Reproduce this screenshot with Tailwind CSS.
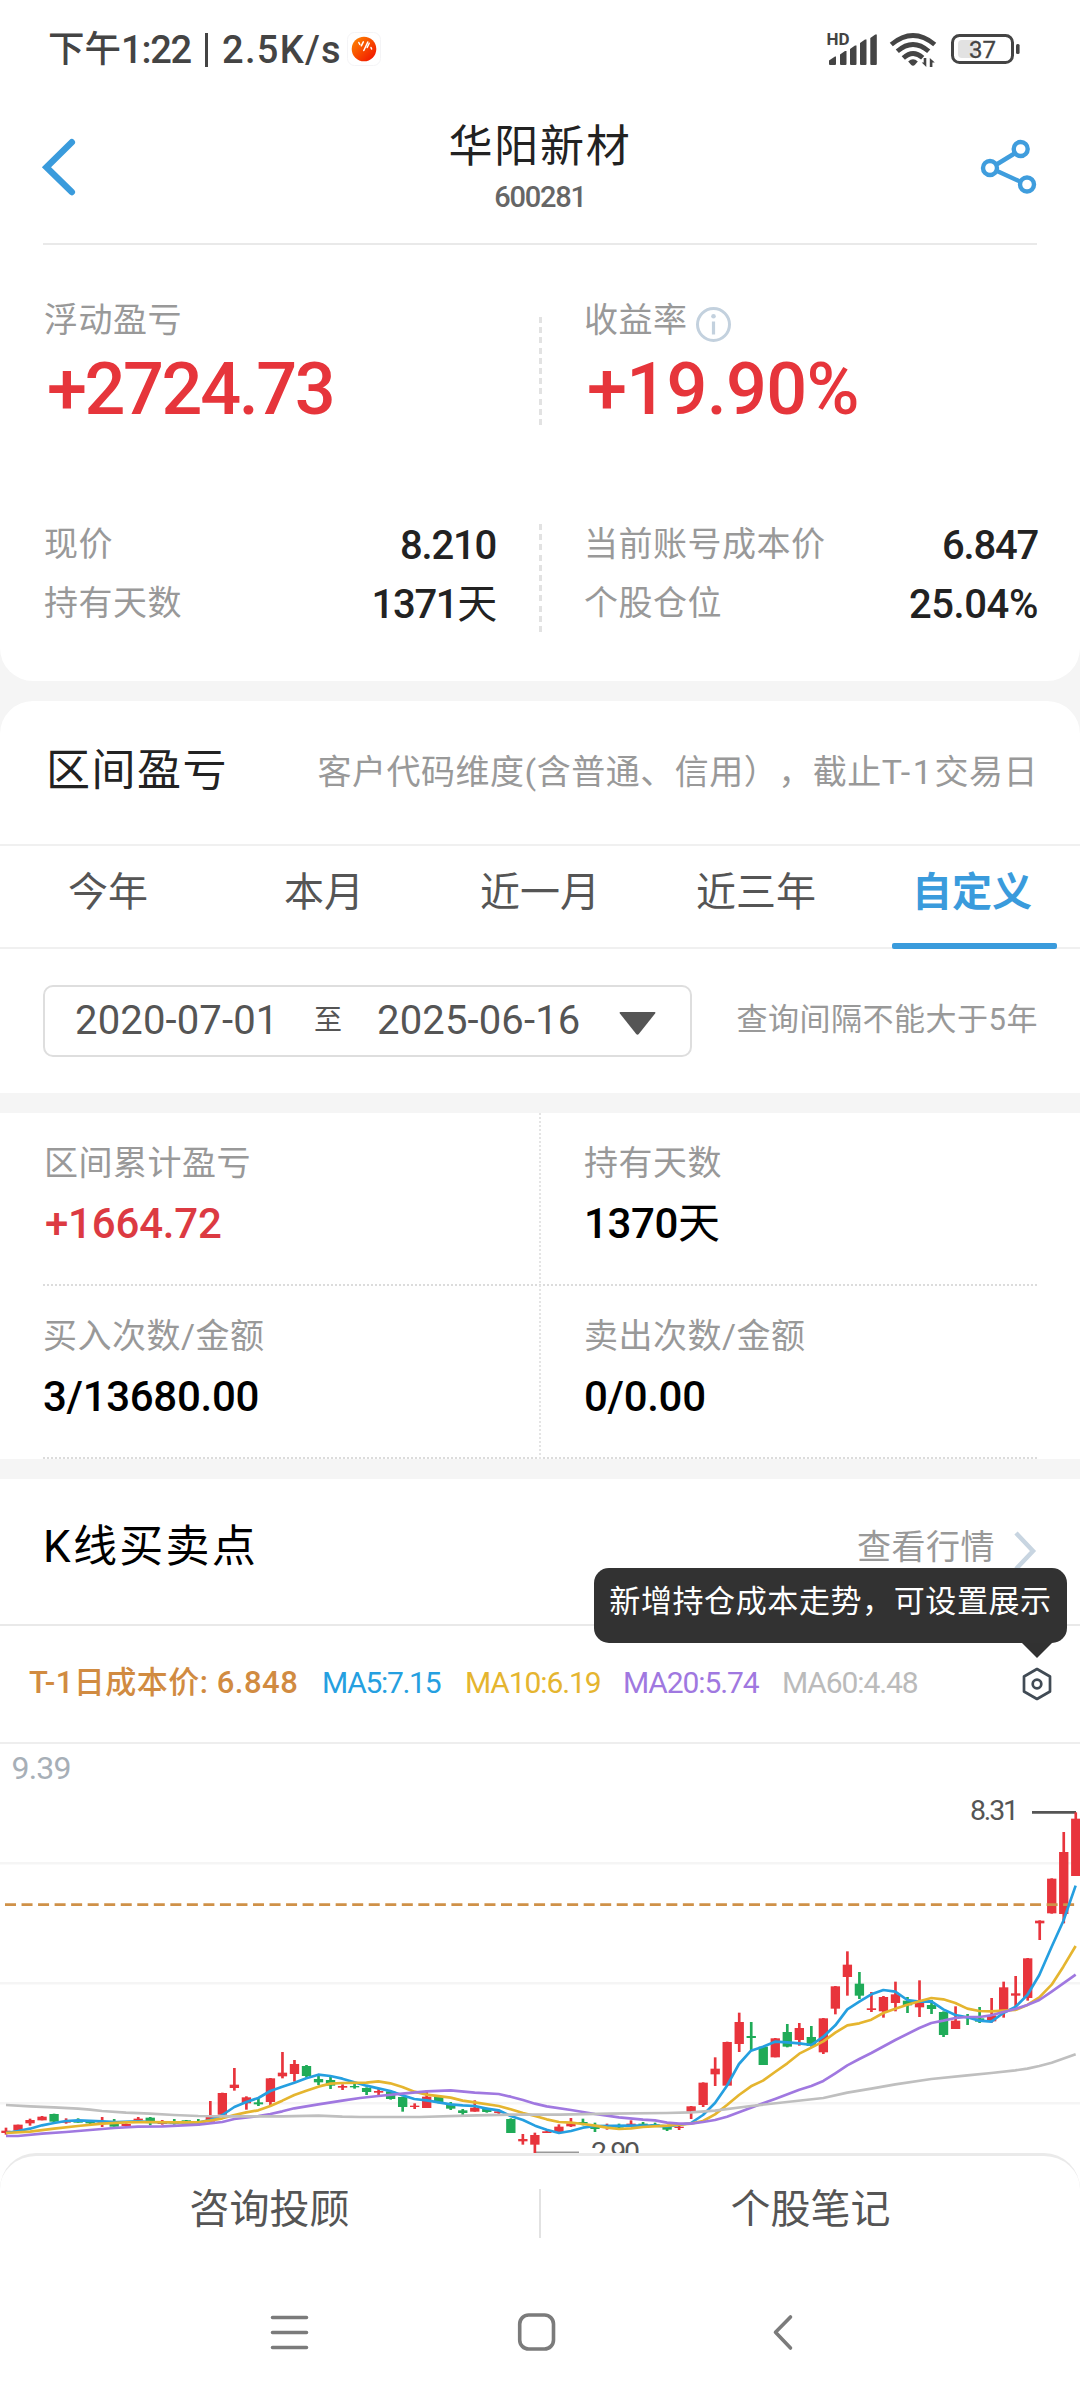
<!DOCTYPE html>
<html lang="zh-CN">
<head>
<meta charset="utf-8">
<title>华阳新材 600281</title>
<script src="https://cdn.jsdelivr.net/npm/@tailwindcss/browser@4"></script>
</head>
<body class="bg-[#f5f5f5]">
<div class="relative w-[1080px] h-[2400px] overflow-hidden flex flex-col font-['Roboto','Noto_Sans_CJK_SC',sans-serif] text-[#222]">

  <!-- summary card -->
  <section class="h-[681px] shrink-0 bg-white rounded-b-[33px]">
    <div class="h-[98px] flex items-center pl-[48px] pr-[58px] text-[#444]">
      <div class="pt-[1px] flex items-center text-[38px] leading-[40px] font-medium whitespace-nowrap">
        <span class="w-[73px] text-[36.5px]">下午</span><span class="w-[84px] tracking-[-1.2px]">1:22</span><span class="w-[3px] h-[34px] bg-[#444]"></span><span class="ml-[14px] w-[119px] tracking-[1.3px]">2.5K/s</span>
      </div>
      <svg class="ml-[6px]" width="34" height="34" viewBox="0 0 34 34">
        <defs><linearGradient id="app" x1="0" y1="0" x2="1" y2="1"><stop offset="0" stop-color="#ff8a00"/><stop offset="1" stop-color="#f00a00"/></linearGradient></defs>
        <rect x=".5" y=".5" width="33" height="33" rx="7" fill="#fff" stroke="#f4f4f6"/>
        <circle cx="17" cy="17" r="12.3" fill="url(#app)"/>
        <path d="M11.800 10.500l1 2M14.300 13.800l2-4M16.800 18.500l4-8.500M20.200 15.500l2-4.200M24 15.500l.6 1.500" stroke="#fff" stroke-width="1.500" fill="none" stroke-linecap="round"/>
      </svg>
      <div class="ml-auto flex items-center">
        <svg width="196" height="40" viewBox="826 29 196 40">
          <text x="826.500" y="45" font-size="17" font-weight="700" fill="#444">HD</text>
          <g fill="#444">
            <path d="M829 60.500l6-4h1V64a1 1 0 0 1-1 1h-5a1 1 0 0 1-1-1zM840 54.500l5-3.500h1.500v13a1 1 0 0 1-1 1H841a1 1 0 0 1-1-1zM850 49l5-3.500h1.500V64a1 1 0 0 1-1 1H851a1 1 0 0 1-1-1zM860 43l5-3.500h1.500V64a1 1 0 0 1-1 1H861a1 1 0 0 1-1-1zM870.300 38l5-3.500h1.500V64a1 1 0 0 1-1 1h-4.500a1 1 0 0 1-1-1z"/>
            <path d="M908.200 61.500q4.800-4.500 9.600 0l-2.800 3.300q-2 1.900-4 0z"/>
            <path d="M926.300 58v9l-4.600-4.500h2V58zM929.800 67v-9l5 4.500h-2.400V67z"/>
          </g>
          <g fill="none" stroke="#444" stroke-width="4.800">
            <path d="M891.300 44.500q21.700-18 43.400 0"/><path d="M897.300 51.300q15.700-13.600 31.400 0"/><path d="M903.300 58q9.700-9 19.400-.3"/>
          </g>
          <rect x="952.500" y="35.500" width="60" height="27" rx="7" fill="none" stroke="#444" stroke-width="3"/>
          <path d="M962 40h15v18h-15a4 4 0 0 1-4-4v-10a4 4 0 0 1 4-4z" fill="#e2e2e2"/>
          <text x="969" y="58" font-size="24" fill="#444" stroke="#444" stroke-width=".3">37</text>
          <rect x="1016" y="44" width="3.600" height="10" rx="1.500" fill="#444"/>
        </svg>
      </div>
    </div>
    <header class="h-[145px] flex justify-between items-start px-[40px]">
      <svg class="mt-[39px]" width="60" height="60" viewBox="40 137 60 60" fill="none" stroke="#3a9bdc" stroke-width="6.500" stroke-linecap="round"><path d="M71.800 142.300L46.500 167.200L71.800 192"/></svg>
      <div class="pt-[27px] flex flex-col items-center">
        <div class="text-[44px] leading-[44px] tracking-[1.8px]">华阳新材</div>
        <div class="mt-[13px] text-[29px] leading-[30px] font-medium tracking-[-1.2px] text-[#666]">600281</div>
      </div>
      <svg class="mt-[37px]" width="60" height="64" viewBox="980 135 60 64" fill="none" stroke="#3f9ddd" stroke-width="4.400">
        <path d="M996.500 164.500L1014.500 153.500M997 171L1020 181.500"/>
        <circle cx="990" cy="168" r="7"/><circle cx="1020.700" cy="149" r="7"/><circle cx="1027" cy="184.500" r="7"/>
      </svg>
    </header>
    <div class="mx-[43px] h-[2px] bg-[#e9e9e9]"></div>

    <div class="mt-[55px] h-[130px] flex">
      <div class="w-[539px] pl-[44px]">
        <div class="text-[34px] leading-[40px] tracking-[0.5px] text-[#999]">浮动盈亏</div>
        <div class="mt-[10px] pl-[3px] text-[72px] leading-[80px] font-medium tracking-[-2.4px] text-[#e6353b]">+2724.73</div>
      </div>
      <div class="mt-[17px] w-[3px] h-[108px] bg-[repeating-linear-gradient(180deg,#e2e2e2_0_6px,transparent_6px_10.2px)]"></div>
      <div class="pl-[42px]">
        <div class="h-[40px] flex text-[34px] leading-[40px] tracking-[0.5px] text-[#999]">收益率
          <svg class="ml-[7px] mt-[6px]" width="37" height="37" viewBox="0 0 37 37" fill="none" stroke="#c3d1de"><circle cx="18.500" cy="18.500" r="16" stroke-width="3"/><path d="M18.500 15.500v13" stroke-width="3.200"/><circle cx="18.500" cy="10.300" r="2.300" fill="#c3d1de" stroke="none"/></svg>
        </div>
        <div class="mt-[10px] pl-[3px] text-[72px] leading-[80px] font-medium tracking-[-0.7px] text-[#e6353b]">+19.90%</div>
      </div>
    </div>

    <div class="mt-[93px] h-[109px] flex text-[34px] leading-[40px] tracking-[0.5px] text-[#999]">
      <div class="w-[539px] pl-[44px] pr-[43px] flex flex-col gap-[19px]">
        <div class="flex justify-between"><span class="pt-[1px]">现价</span><span class="text-[40px] font-medium tracking-[-1.2px] text-[#222] pt-[3px]">8.210</span></div>
        <div class="flex justify-between -mt-[3px]"><span class="pt-[1px]">持有天数</span><span class="text-[40px] font-medium tracking-[-1.3px] text-[#222] pt-[3px]">1371<span class="font-normal">天</span></span></div>
      </div>
      <div class="mt-[1px] w-[3px] h-[108px] bg-[repeating-linear-gradient(180deg,#e2e2e2_0_6px,transparent_6px_10.2px)]"></div>
      <div class="flex-1 pl-[42px] pr-[42px] flex flex-col gap-[19px]">
        <div class="flex justify-between"><span class="pt-[1px]">当前账号成本价</span><span class="text-[40px] font-medium tracking-[-1.2px] text-[#222] pt-[3px]">6.847</span></div>
        <div class="flex justify-between -mt-[3px]"><span class="pt-[1px]">个股仓位</span><span class="text-[40px] font-medium tracking-[-0.4px] text-[#222] pt-[3px]">25.04%</span></div>
      </div>
    </div>
  </section>

  <!-- period profit -->
  <section class="mt-[20px] h-[392px] shrink-0 bg-white rounded-t-[33px] flex flex-col">
    <div class="h-[143px] pt-[46px] pl-[46px] pr-[42px] flex justify-between">
      <h2 class="text-[44px] leading-[48px] tracking-[1.5px]">区间盈亏</h2>
      <p class="text-[34px] leading-[51px] tracking-[0.5px] text-[#999] whitespace-nowrap [text-spacing-trim:space-all]">客户代码维度(含普通、信用），截止<span class="tracking-[2.6px]">T-1</span>交易日</p>
    </div>
    <nav class="h-[105px] border-y-2 border-[#f0f0f0] grid grid-cols-5 text-center text-[40px] leading-[48px] text-[#555]">
      <span class="pt-[23px]">今年</span><span class="pt-[23px]">本月</span><span class="pt-[23px]">近一月</span><span class="pt-[23px]">近三年</span>
      <span class="relative pt-[23px] font-bold text-[#3a9bdc]">自定义<i class="absolute left-[28px] -bottom-[2px] w-[165px] h-[6px] rounded-[2px] bg-[#3a9bdc]"></i></span>
    </nav>
    <div class="pt-[36px] pl-[43px] pr-[42px] flex justify-between">
      <div class="w-[649px] h-[72px] border-2 border-[#dedede] rounded-[10px] flex items-center pl-[30px] text-[40px] leading-[44px] text-[#555]">
        <span class="w-[205px] whitespace-nowrap tracking-[0.15px]">2020-07-01</span>
        <span class="ml-[34px] text-[28px]">至</span>
        <span class="ml-[35px] w-[203px] whitespace-nowrap tracking-[0.15px]">2025-06-16</span>
        <svg class="ml-[39px] mt-[4px]" width="37" height="23" viewBox="0 0 37 23"><path d="M1.500 0h34q1.500 0 .6 1.500L19.800 22q-1.300 1.500-2.600 0L.9 1.500Q0 0 1.500 0z" fill="#555"/></svg>
      </div>
      <span class="text-[31px] leading-[70px] tracking-[0.5px] text-[#999] whitespace-nowrap">查询间隔不能大于5年</span>
    </div>
  </section>

  <!-- period details -->
  <section class="relative mt-[20px] h-[346px] shrink-0 bg-white px-[43px] text-[34px] leading-[40px] tracking-[0.5px] text-[#999]">
    <div class="h-[173px] flex pt-[30px]">
      <div class="w-[541px]"><div class="pl-[1px]">区间累计盈亏</div><div class="mt-[21px] pl-[2px] text-[42px] font-medium tracking-[-0.2px] text-[#dc3a42]">+1664.72</div></div>
      <div><div>持有天数</div><div class="mt-[21px] text-[42px] font-medium tracking-[-0.4px] text-black">1370<span class="font-normal">天</span></div></div>
    </div>
    <div class="-mt-[2px] h-[2px] bg-[repeating-linear-gradient(90deg,#dcdcdc_0_2px,transparent_2px_4px)]"></div>
    <div class="h-[173px] flex pt-[30px]">
      <div class="w-[541px]"><div>买入次数/金额</div><div class="mt-[21px] text-[42px] font-medium tracking-[-0.3px] text-black">3/13680.00</div></div>
      <div><div>卖出次数/金额</div><div class="mt-[21px] text-[42px] font-medium tracking-[-0.3px] text-black">0/0.00</div></div>
    </div>
    <div class="-mt-[2px] h-[2px] bg-[repeating-linear-gradient(90deg,#dcdcdc_0_2px,transparent_2px_4px)]"></div>
    <div class="absolute left-[539px] top-0 w-[2px] h-[346px] bg-[repeating-linear-gradient(180deg,#e4e4e4_0_2px,transparent_2px_4px)]"></div>
  </section>

  <!-- candlestick chart -->
  <section class="relative mt-[20px] h-[921px] shrink-0 bg-white">
    <div class="h-[147px] border-b-2 border-[#e9e9e9] pt-[43px] pl-[43px] pr-[41px] flex justify-between">
      <h2 class="text-[44px] leading-[50px] tracking-[2.3px] text-black">K线买卖点</h2>
      <div class="flex text-[34px] leading-[50px] tracking-[0.5px] text-[#999]">查看行情
        <svg class="ml-[18px] mt-[8px]" width="26" height="42" viewBox="0 0 26 42" fill="none" stroke="#c8d5e1" stroke-width="4.500"><path d="M3 3L20 21L3 39"/></svg>
      </div>
    </div>
    <div class="h-[118px] border-b-2 border-[#eee] flex pl-[29px] text-[30px] leading-[114px] tracking-[-1.3px] whitespace-nowrap">
      <span class="w-[293px] text-[31px] font-medium tracking-[0.5px] text-[#d18b41]">T-1日成本价: 6.848</span>
      <span class="w-[143px] text-[#259fe0]">MA5:7.15</span>
      <span class="w-[158px] tracking-[-1.1px] text-[#e5b52f]">MA10:6.19</span>
      <span class="w-[159px] tracking-[-1.1px] text-[#a078e0]">MA20:5.74</span>
      <span class="tracking-[-1.1px] text-[#bbb]">MA60:4.48</span>
      <svg class="ml-auto mr-[26px] mt-[40px]" width="34" height="36" viewBox="0 0 34 36" fill="none" stroke="#414b55" stroke-width="2.700"><path d="M17 3L30 10.500V25.500L17 33L4 25.500V10.500Z" stroke-linejoin="round"/><circle cx="17" cy="18" r="4.300"/></svg>
    </div>
    <svg width="1080" height="409" viewBox="0 1744 1080 409">
      <g fill="#f5f5f5"><rect y="1862" width="1080" height="2.500"/><rect y="1982" width="1080" height="2.500"/><rect y="2102" width="1080" height="2.500"/></g>
      <text x="11.500" y="1779" font-size="32" fill="#a7afb7" textLength="60">9.39</text>
      <text x="970" y="1820" font-size="28.500" fill="#555" textLength="49">8.31</text>
      <path d="M1032 1812.300h44" stroke="#555" stroke-width="2.700"/>
      <text x="591" y="2162" font-size="28.500" fill="#555" textLength="49">2.90</text>
      <path d="M535 2152.500h44" stroke="#999" stroke-width="2"/>
      <g transform="translate(0 1780) scale(.33333)">
        <g id="candles"></g>
        <path d="M15 374H3225" stroke="#cf9148" stroke-width="8" stroke-dasharray="33 16.600"/>
        <g fill="none" stroke-width="8" stroke-linejoin="round">
          <polyline stroke="#259fe0" points="18,1059 54,1053 90,1046 126,1036 162,1029 198,1023 234,1021 306,1024 350,1026 414,1024 450,1026 595,1028 630,1020 667,1005 703,981 739,966 775,954 811,933 847,920 883,908 919,895 955,884 991,888 1027,896 1063,907 1099,917 1135,925 1171,933 1207,946 1243,957 1280,961 1316,967 1352,973 1388,976 1424,978 1460,986 1496,991 1532,1008 1569,1020 1605,1037 1640,1049 1677,1059 1713,1053 1749,1043 1785,1038 1893,1037 1965,1037 2001,1039 2037,1035 2073,1029 2109,1005 2145,969 2181,917 2217,852 2253,812 2289,800 2325,785 2362,787 2398,790 2434,795 2470,770 2506,736 2542,688 2578,665 2614,643 2650,630 2686,635 2722,660 2758,665 2794,664 2830,688 2866,705 2902,712 2938,722 2974,725 3010,699 3046,681 3082,645 3118,585 3155,500 3190,423 3227,317"/>
          <polyline stroke="#e5b52f" points="18,1059 90,1055 162,1046 234,1038 306,1031 378,1027 450,1026 522,1027 595,1027 630,1022 667,1015 703,1005 739,997 775,991 811,978 847,962 883,945 919,932 955,920 991,911 1027,909 1099,908 1135,904 1171,910 1207,921 1243,935 1280,944 1352,953 1388,962 1424,967 1496,978 1532,988 1569,999 1605,1008 1640,1018 1677,1026 1713,1028 1749,1032 1785,1037 1821,1043 1857,1047 1893,1045 1929,1041 2001,1037 2073,1031 2109,1023 2145,1003 2181,975 2217,945 2253,919 2289,902 2325,876 2362,850 2398,821 2434,803 2470,784 2506,758 2542,736 2578,730 2614,719 2650,699 2686,686 2722,674 2758,664 2794,654 2830,658 2866,669 2902,686 2938,693 2974,694 3010,692 3046,690 3082,675 3118,652 3155,614 3190,560 3227,498"/>
          <polyline stroke="#a078e0" points="18,1068 54,1068 126,1061 198,1056 270,1050 342,1044 414,1040 487,1039 595,1034 667,1026 703,1017 775,1008 811,1002 847,994 883,985 955,973 1027,962 1080,954 1135,948 1207,941 1280,934 1352,931 1424,938 1496,942 1532,950 1569,960 1605,971 1640,979 1713,990 1785,1002 1857,1012 1929,1019 1965,1021 2001,1028 2037,1031 2073,1031 2109,1026 2145,1020 2181,1010 2253,983 2289,970 2325,957 2398,929 2434,918 2470,903 2506,880 2542,856 2578,837 2614,819 2686,780 2758,744 2794,729 2830,722 2866,714 2902,711 2938,711 2974,706 3010,696 3046,687 3082,675 3118,660 3155,635 3227,584"/>
          <polyline stroke="#bfbfbf" points="18,975 90,979 162,982 234,986 270,989 306,993 378,998 450,1001 522,1005 595,1008 700,1009 847,1009 955,1007 1027,1010 1080,1011 1260,1011 1400,1007 1530,1004 1680,1004 1830,1001 2000,999 2073,997 2145,992 2253,978 2470,954 2542,938 2614,926 2686,913 2794,897 2902,886 2974,879 3046,871 3082,866 3118,858 3155,848 3227,823"/>
        </g>
      </g>
    </svg>
    <!-- tooltip -->
    <div class="absolute left-[594px] top-[89px] w-[473px] h-[75px] rounded-[15px] bg-[#2b2b2b]/97 text-white text-[31px] leading-[68px] tracking-[0.6px] text-center whitespace-nowrap">新增持仓成本走势，可设置展示
      <svg class="absolute left-[428px] top-[75px]" width="30" height="15" viewBox="0 0 30 15"><path d="M0 0H30L15 15Z" fill="#313131"/></svg>
    </div>
  </section>

  <!-- bottom actions and system navigation -->
  <footer class="absolute left-0 top-[2153px] w-full h-[247px] bg-white border-t-[3px] border-[#eaeaea] rounded-t-[36px] text-[#555]">
    <div class="mt-[33px] h-[49px] flex text-center text-[40px] leading-[42px]">
      <span class="w-[539px]">咨询投顾</span><span class="w-[2px] bg-[#e2e2e2]"></span><span class="w-[539px]">个股笔记</span>
    </div>
    <svg class="absolute left-0 top-[147px]" width="1080" height="60" viewBox="0 2303 1080 60" fill="none" stroke="#7b7b7b" stroke-width="3.600" stroke-linecap="round" stroke-linejoin="round">
      <path d="M272.500 2317.500h34M272.500 2332.500h34M272.500 2347.500h34"/>
      <rect x="519.700" y="2315" width="33.800" height="34" rx="9"/>
      <path d="M790.500 2317L775.500 2332.300L790.500 2348"/>
    </svg>
  </footer>
</div>
<script>
  // [up?, high, body top, body bottom, low] in thirds of a pixel below the chart origin
  const data = [
    [1,1043,1052,1059,1064],[1,1034,1034,1052,1052],[1,1016,1020,1030,1037],[1,1008,1010,1021,1021],[0,1001,1002,1025,1026],
    [1,1015,1024,1027,1031],[0,1015,1024,1026,1028],[0,1022,1025,1030,1032],[1,1011,1024,1026,1041],[0,1017,1032,1040,1040],
    [1,1030,1032,1038,1038],[1,1011,1016,1021,1021],[0,1011,1013,1024,1036],[1,1020,1028,1030,1034],[0,1017,1027,1030,1034],
    [0,1020,1021,1024,1026],[0,1017,1024,1028,1037],[1,963,1010,1025,1025],[1,938,939,1004,1004],[1,864,914,924,932],
    [1,949,952,970,989],[0,952,967,973,978],[1,894,895,966,975],[1,816,878,889,895],[1,840,852,882,905],
    [0,855,858,888,893],[0,885,897,907,915],[0,890,900,917,927],[1,913,918,923,930],[0,910,918,922,926],
    [0,922,924,936,945],[1,925,933,938,945],[0,932,934,957,959],[0,950,951,981,995],[1,970,977,981,987],
    [1,931,950,984,984],[0,947,950,967,970],[0,966,972,986,990],[0,987,991,999,1005],[1,961,983,995,995],
    [0,983,986,996,998],[1,991,994,999,1002],[0,1015,1017,1059,1059],[1,1062,1077,1084,1094],[1,1058,1065,1094,1119],
    [1,1048,1054,1059,1059],[1,1033,1040,1056,1058],[1,1014,1030,1039,1041],[0,1016,1026,1031,1036],[0,1028,1040,1047,1056],
    [1,1031,1040,1044,1049],[0,1031,1037,1043,1047],[1,1021,1031,1036,1040],[0,1026,1031,1036,1040],[0,1028,1033,1037,1040],
    [0,1038,1040,1049,1053],[1,1036,1040,1044,1050],[1,978,979,995,1017],[1,907,908,975,981],[1,832,866,883,918],
    [1,785,786,917,917],[1,698,726,792,816],[0,726,768,774,812],[0,798,800,855,855],[1,774,775,832,832],
    [0,732,756,800,802],[1,729,744,780,797],[0,738,771,798,800],[1,714,715,817,822],[1,618,619,686,703],
    [1,514,554,591,647],[0,576,611,647,657],[1,636,685,690,696],[1,648,651,694,713],[1,605,643,669,694],
    [0,651,662,676,699],[1,601,667,682,711],[0,660,675,687,702],[0,694,696,765,771],[1,679,722,747,747],
    [0,702,710,714,735],[0,681,715,725,729],[1,654,706,724,728],[1,605,622,690,713],[1,588,640,647,680],
    [1,534,535,654,662],[1,421,422,430,480],[1,295,296,400,401],[1,156,216,402,430],[1,97,116,288,288]
  ];
  document.getElementById('candles').innerHTML = data.map(([up, hi, t, b, lo], i) => {
    const x = 18 + i * 36.06, c = up ? '#e8343c' : '#1fab58';
    return `<rect x="${x - 4}" y="${hi}" width="8" height="${lo - hi}" fill="${c}"/><rect x="${x - 14}" y="${t}" width="28" height="${Math.max(b - t, 4)}" fill="${c}"/>`;
  }).join('');
</script>
</body>
</html>
